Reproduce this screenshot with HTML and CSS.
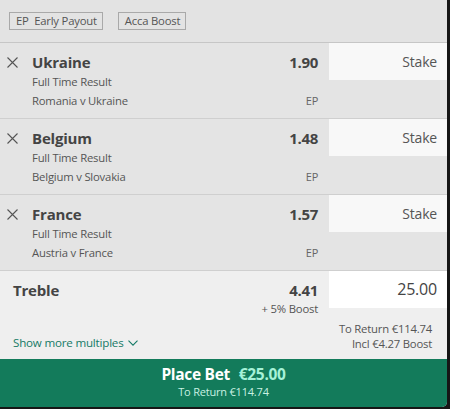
FILE: index.html
```html
<!DOCTYPE html>
<html>
<head>
<meta charset="utf-8">
<link rel="stylesheet" href="styles.css">
</head>
<body>
<div class="slip">
  <div class="toolbar">
    <span class="chip">EP&nbsp; Early Payout</span>
    <span class="chip">Acca Boost</span>
  </div>

  <div class="sel">
    <div class="sel-main">
      <svg class="close" width="11" height="11" viewBox="0 0 11 11"><path d="M0.5 0.5L10.5 10.5M10.5 0.5L0.5 10.5" stroke="#555" stroke-width="1.1" fill="none"/></svg>
      <div class="sel-info">
        <div class="line1"><span class="name">Ukraine</span><span class="odds">1.90</span></div>
        <div class="market">Full Time Result</div>
        <div class="line3"><span class="event">Romania v Ukraine</span><span class="ep">EP</span></div>
      </div>
    </div>
    <div class="stake-col"><div class="stake">Stake</div></div>
  </div>

  <div class="sel">
    <div class="sel-main">
      <svg class="close" width="11" height="11" viewBox="0 0 11 11"><path d="M0.5 0.5L10.5 10.5M10.5 0.5L0.5 10.5" stroke="#555" stroke-width="1.1" fill="none"/></svg>
      <div class="sel-info">
        <div class="line1"><span class="name">Belgium</span><span class="odds">1.48</span></div>
        <div class="market">Full Time Result</div>
        <div class="line3"><span class="event">Belgium v Slovakia</span><span class="ep">EP</span></div>
      </div>
    </div>
    <div class="stake-col"><div class="stake">Stake</div></div>
  </div>

  <div class="sel">
    <div class="sel-main">
      <svg class="close" width="11" height="11" viewBox="0 0 11 11"><path d="M0.5 0.5L10.5 10.5M10.5 0.5L0.5 10.5" stroke="#555" stroke-width="1.1" fill="none"/></svg>
      <div class="sel-info">
        <div class="line1"><span class="name">France</span><span class="odds">1.57</span></div>
        <div class="market">Full Time Result</div>
        <div class="line3"><span class="event">Austria v France</span><span class="ep">EP</span></div>
      </div>
    </div>
    <div class="stake-col"><div class="stake">Stake</div></div>
  </div>

  <div class="multi">
    <div class="multi-main">
      <div class="multi-top">
        <span class="name">Treble</span>
        <div class="multi-odds">
          <span class="odds">4.41</span>
          <span class="boost">+ 5% Boost</span>
        </div>
      </div>
      <div class="more">Show more multiples
        <svg width="10" height="6" viewBox="0 0 10 6"><path d="M0.5 0.6L5 5.1L9.5 0.6" stroke="#157a66" stroke-width="1.1" fill="none"/></svg>
      </div>
    </div>
    <div class="multi-stake-col">
      <div class="stake filled">25.00</div>
      <div class="returns">
        <div>To Return €114.74</div>
        <div>Incl €4.27 Boost</div>
      </div>
    </div>
  </div>

  <div class="place">
    <div class="place-title">Place Bet <span class="amount">€25.00</span></div>
    <div class="place-sub">To Return €114.74</div>
  </div>
</div>
</body>
</html>
```

FILE: styles.css
```css
html, body {
  margin: 0;
  padding: 0;
  background: #161616;
}
body {
  font-family: "Open Sans", "Noto Sans", sans-serif;
  color: #4a4a4a;
}
.slip {
  width: 447px;
  height: 407px;
  background: #e4e4e4;
  border-bottom-right-radius: 5px;
  overflow: hidden;
  display: flex;
  flex-direction: column;
}
.toolbar {
  height: 43px;
  flex: none;
  box-sizing: border-box;
  border-bottom: 1px solid #c6c6c6;
  background: #e3e3e3;
  display: flex;
  align-items: flex-start;
  padding: 12px 0 0 9px;
  gap: 15px;
}
.chip {
  height: 18px;
  box-sizing: border-box;
  border: 1px solid #a9a9a9;
  font-size: 11.3px;
  line-height: 16px;
  padding: 0 5px 0 6px;
  color: #555;
  letter-spacing: -0.2px;
}
.sel {
  height: 76px;
  flex: none;
  box-sizing: border-box;
  border-bottom: 1px solid #cfcfcf;
  display: flex;
  background: #e4e4e4;
}
.sel-main {
  width: 329px;
  display: flex;
  box-sizing: border-box;
  padding: 0 11px 0 7px;
}
.close {
  margin-top: 14px;
  flex: none;
}
.sel-info {
  flex: 1;
  margin-left: 14px;
  padding-top: 9px;
}
.line1, .line3 {
  display: flex;
  justify-content: space-between;
  align-items: baseline;
}
.name {
  font-weight: 700;
  font-size: 15px;
  line-height: 20px;
  color: #444;
  letter-spacing: -0.2px;
}
.odds {
  font-weight: 700;
  font-size: 15px;
  line-height: 20px;
  color: #444;
  letter-spacing: -0.3px;
}
.market {
  font-size: 11.3px;
  line-height: 20px;
  color: #555;
  letter-spacing: -0.2px;
}
.event {
  font-size: 11.3px;
  line-height: 18px;
  color: #555;
  letter-spacing: -0.2px;
}
.ep {
  font-size: 11px;
  color: #666;
  letter-spacing: -0.3px;
}
.stake-col {
  width: 118px;
}
.stake {
  height: 37px;
  background: #f8f8f8;
  font-size: 14px;
  line-height: 37px;
  text-align: right;
  padding-right: 10px;
  color: #555;
  letter-spacing: -0.2px;
}
.multi {
  flex: 1;
  background: #efefef;
  display: flex;
}
.multi-main {
  width: 329px;
  box-sizing: border-box;
  padding: 9px 11px 0 13px;
  display: flex;
  flex-direction: column;
}
.multi-top {
  display: flex;
  justify-content: space-between;
}
.multi-odds {
  display: flex;
  flex-direction: column;
  align-items: flex-end;
}
.boost {
  font-size: 11.3px;
  line-height: 17px;
  color: #555;
  letter-spacing: -0.2px;
}
.more {
  margin-top: 18px;
  font-size: 11.6px;
  color: #157a66;
  letter-spacing: -0.2px;
  display: flex;
  align-items: center;
  gap: 4px;
}
.multi-stake-col {
  width: 118px;
}
.stake.filled {
  background: #ffffff;
  font-size: 16px;
  color: #444;
}
.returns {
  margin-top: 13px;
  text-align: right;
  padding-right: 15px;
  font-size: 11.3px;
  line-height: 15px;
  color: #555;
  letter-spacing: -0.2px;
}
.place {
  height: 48px;
  flex: none;
  background: #137b5b;
  color: #fff;
  text-align: center;
  box-sizing: border-box;
  padding-top: 5px;
}
.place-title {
  font-weight: 700;
  font-size: 15.5px;
  line-height: 20px;
  letter-spacing: -0.3px;
}
.amount {
  color: #a6f2d8;
  margin-left: 5px;
}
.place-sub {
  font-size: 11px;
  line-height: 16px;
  color: #c8f1e2;
  letter-spacing: -0.2px;
}
```
